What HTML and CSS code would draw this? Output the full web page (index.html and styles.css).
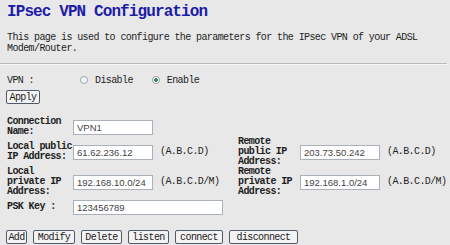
FILE: index.html
```html
<!DOCTYPE html>
<html lang="en">
<head>
    <meta charset="UTF-8">
    <title>IPsec VPN Configuration</title>
    <link rel="stylesheet" href="styles.css">
</head>
<body>
    <div class="page">
        <h1 class="title">IPsec VPN Configuration</h1>
        <p class="intro">This page is used to configure the parameters for the IPsec VPN of your ADSL Modem/Router.</p>
        <hr class="divider">

        <div class="vpn-row">
            <span class="vpn-label">VPN :</span>
            <label class="choice"><input type="radio" name="vpn" value="0">Disable</label>
            <label class="choice choice-on"><input type="radio" name="vpn" value="1" checked>Enable</label>
        </div>
        <button type="button" class="btn btn-apply">Apply</button>

        <table class="form">
            <tr class="row-short">
                <th class="label-local">Connection Name:</th>
                <td class="cell-local"><input type="text" class="field" value="VPN1"></td>
                <th class="label-remote"></th>
                <td></td>
            </tr>
            <tr class="row-tall">
                <th class="label-local">Local public IP Address:</th>
                <td class="cell-local"><input type="text" class="field" value="61.62.236.12"><span class="hint">(A.B.C.D)</span></td>
                <th class="label-remote">Remote public IP Address:</th>
                <td><input type="text" class="field" value="203.73.50.242"><span class="hint">(A.B.C.D)</span></td>
            </tr>
            <tr class="row-tall">
                <th class="label-local">Local private IP Address:</th>
                <td class="cell-local"><input type="text" class="field" value="192.168.10.0/24"><span class="hint">(A.B.C.D/M)</span></td>
                <th class="label-remote">Remote private IP Address:</th>
                <td><input type="text" class="field" value="192.168.1.0/24"><span class="hint">(A.B.C.D/M)</span></td>
            </tr>
            <tr class="row-psk">
                <th class="label-local">PSK Key :</th>
                <td colspan="3"><input type="text" class="field field-wide" value="123456789"></td>
            </tr>
        </table>

        <div class="actions">
            <button type="button" class="btn btn-add">Add</button>
            <button type="button" class="btn btn-modify">Modify</button>
            <button type="button" class="btn btn-delete">Delete</button>
            <button type="button" class="btn btn-listen">listen</button>
            <button type="button" class="btn btn-connect">connect</button>
            <button type="button" class="btn btn-disconnect">disconnect</button>
        </div>
    </div>
</body>
</html>
```

FILE: styles.css
```css
body {
    margin: 0;
    background-color: #e8e8e8;
    color: #1e1e1e;
    font-family: "Liberation Mono", monospace;
    font-size: 10px;
    letter-spacing: -0.6px;
}
.page {
    padding: 2px 0 0 7px;
}
.title {
    margin: 0;
    font-size: 16px;
    line-height: 20px;
    letter-spacing: -0.9px;
    color: #1c1ca8;
}
.intro {
    margin: 10px 0 0;
    line-height: 11px;
    width: 420px;
}
.divider {
    margin: 9px 0 0 -7px;
    width: 447px;
    height: 0;
    border: none;
    border-top: 1px solid #b9b9b9;
    border-bottom: 1px solid #f8f8f8;
}
.vpn-row {
    display: flex;
    align-items: center;
    height: 14px;
    margin-top: 8px;
}
.vpn-label {
    width: 73px;
}
.choice {
    display: flex;
    align-items: center;
    margin-right: 19px;
}
.choice input {
    appearance: none;
    width: 8px;
    height: 8px;
    margin: 0 7px 0 0;
    border: 1px solid #9aa2aa;
    border-radius: 50%;
    background: #fafafa;
}
.choice input:checked {
    background: radial-gradient(circle, #3d8a63 0 1.6px, #fafafa 2.2px);
}
.btn {
    height: 14px;
    padding: 0;
    font-family: "Liberation Mono", monospace;
    font-size: 10px;
    letter-spacing: -0.6px;
    line-height: 11px;
    color: #222;
    background-color: #f3f3f3;
    border: 1px solid #4f5b68;
    border-radius: 2px;
}
.btn-apply {
    display: block;
    width: 34px;
    margin: 3px 0 0 -1px;
}
.form {
    margin-top: 13px;
    border-collapse: collapse;
    table-layout: fixed;
}
.form th,
.form td {
    padding: 0;
    vertical-align: middle;
    text-align: left;
    line-height: 10px;
}
.form th {
    font-weight: bold;
}
.form td {
    white-space: nowrap;
}
.label-local {
    width: 66px;
}
.cell-local {
    width: 165px;
}
.label-remote {
    width: 62px;
}
.row-short {
    height: 20px;
}
.row-tall {
    height: 30px;
}
.row-psk {
    height: 20px;
}
.field {
    box-sizing: border-box;
    width: 80px;
    height: 15px;
    margin: 0;
    padding: 0 3px;
    border: 1px solid #a9b1ba;
    background: #ffffff;
    font-family: "Liberation Sans", sans-serif;
    font-size: 9.5px;
    letter-spacing: 0;
    color: #444;
    vertical-align: middle;
}
.field-wide {
    width: 150px;
}
.hint {
    margin-left: 7px;
    vertical-align: middle;
}
.actions {
    display: flex;
    gap: 6px;
    margin: 13px 0 0 -1px;
}
.btn-add { width: 21px; }
.btn-modify { width: 42px; }
.btn-delete { width: 41px; }
.btn-listen { width: 41px; }
.btn-connect { width: 48px; }
.btn-disconnect { width: 69px; }
```
